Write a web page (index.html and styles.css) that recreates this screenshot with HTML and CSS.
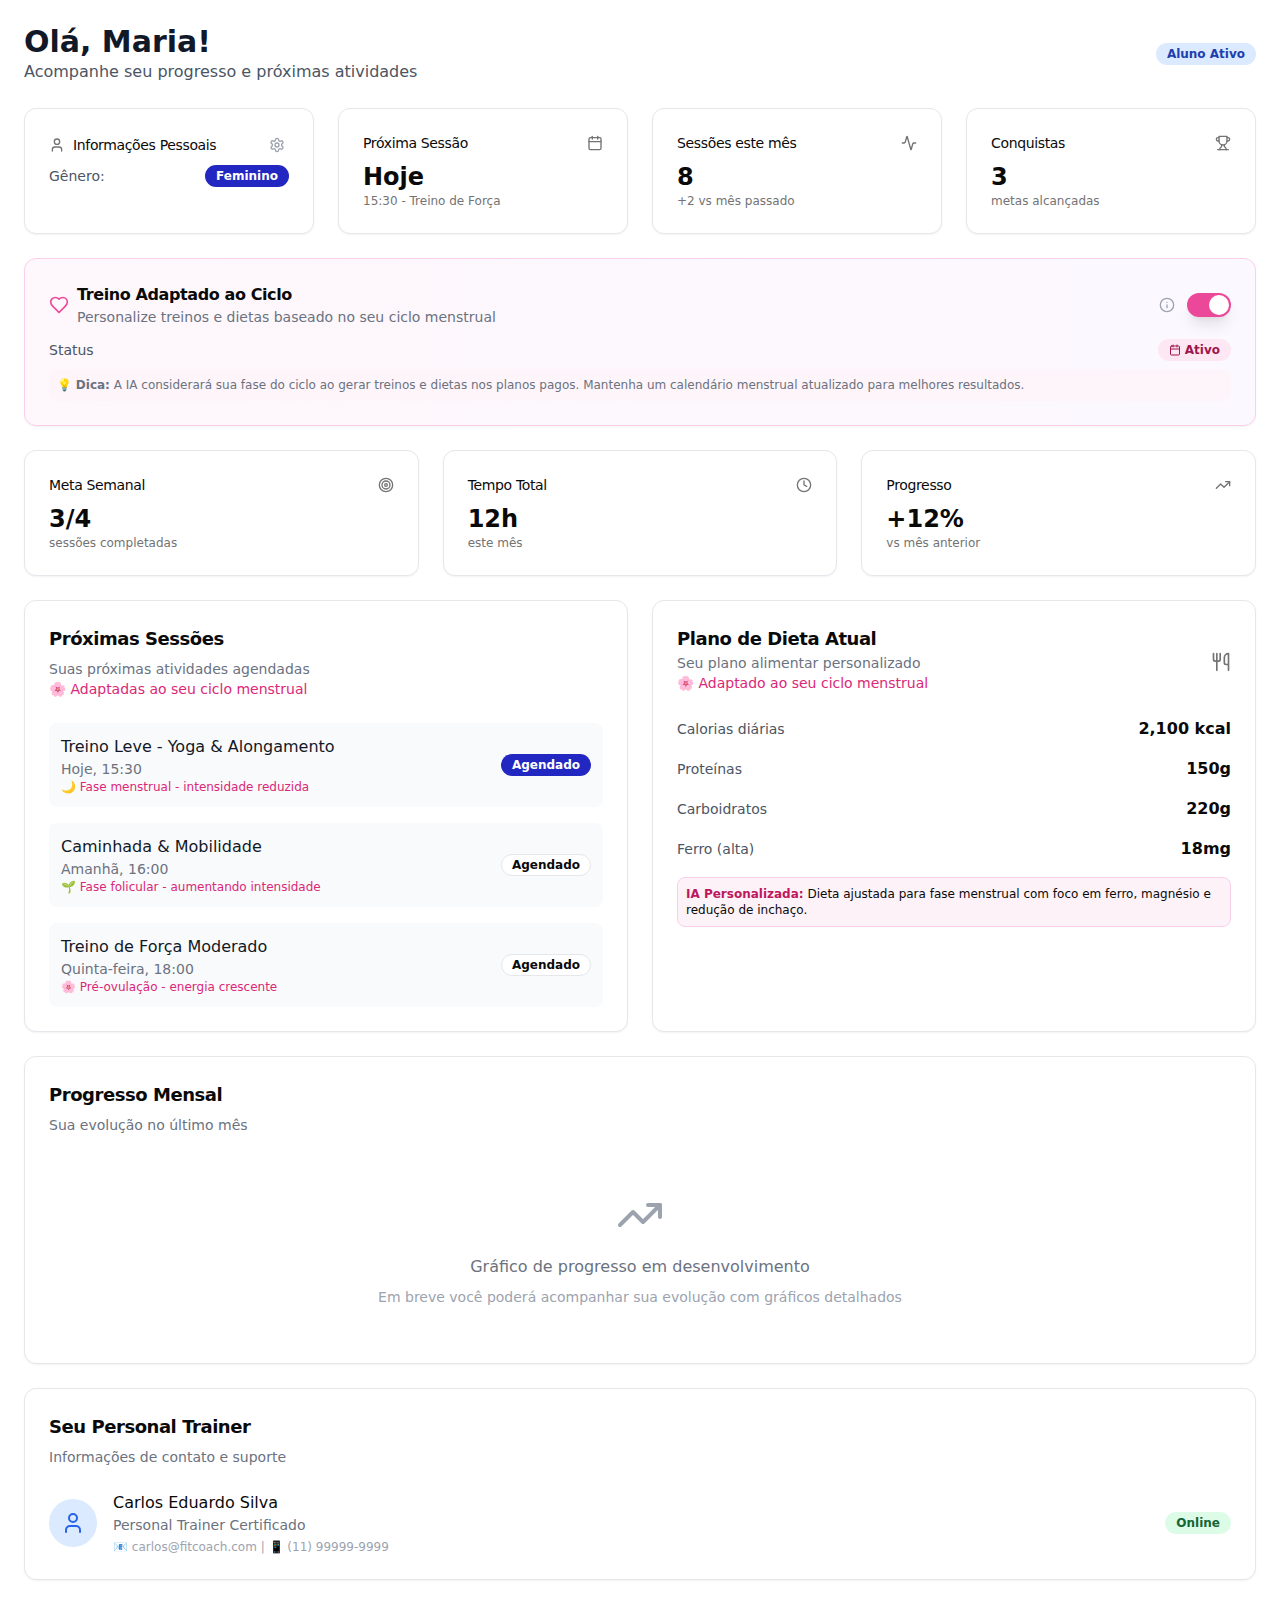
FILE: index.html
```html
<!DOCTYPE html>
<html lang="pt-BR">
<head>
<meta charset="utf-8">
<title>Painel do Aluno</title>
<link rel="stylesheet" href="styles.css">
</head>
<body>
<svg class="sprite" xmlns="http://www.w3.org/2000/svg">
  <symbol id="i-user" viewBox="0 0 24 24"><path d="M19 21v-2a4 4 0 0 0-4-4H9a4 4 0 0 0-4 4v2"/><circle cx="12" cy="7" r="4"/></symbol>
  <symbol id="i-settings" viewBox="0 0 24 24"><path d="M12.22 2h-.44a2 2 0 0 0-2 2v.18a2 2 0 0 1-1 1.73l-.43.25a2 2 0 0 1-2 0l-.15-.08a2 2 0 0 0-2.73.73l-.22.38a2 2 0 0 0 .73 2.73l.15.1a2 2 0 0 1 1 1.72v.51a2 2 0 0 1-1 1.74l-.15.09a2 2 0 0 0-.73 2.73l.22.38a2 2 0 0 0 2.73.73l.15-.08a2 2 0 0 1 2 0l.43.25a2 2 0 0 1 1 1.73V20a2 2 0 0 0 2 2h.44a2 2 0 0 0 2-2v-.18a2 2 0 0 1 1-1.73l.43-.25a2 2 0 0 1 2 0l.15.08a2 2 0 0 0 2.73-.73l.22-.39a2 2 0 0 0-.73-2.73l-.15-.08a2 2 0 0 1-1-1.74v-.5a2 2 0 0 1 1-1.74l.15-.09a2 2 0 0 0 .73-2.73l-.22-.38a2 2 0 0 0-2.73-.73l-.15.08a2 2 0 0 1-2 0l-.43-.25a2 2 0 0 1-1-1.73V4a2 2 0 0 0-2-2z"/><circle cx="12" cy="12" r="3"/></symbol>
  <symbol id="i-calendar" viewBox="0 0 24 24"><path d="M8 2v4"/><path d="M16 2v4"/><rect x="3" y="4" width="18" height="18" rx="2"/><path d="M3 10h18"/></symbol>
  <symbol id="i-activity" viewBox="0 0 24 24"><path d="M22 12h-2.48a2 2 0 0 0-1.93 1.46l-2.35 8.36a.25.25 0 0 1-.48 0L9.24 2.18a.25.25 0 0 0-.48 0l-2.35 8.36A2 2 0 0 1 4.49 12H2"/></symbol>
  <symbol id="i-trophy" viewBox="0 0 24 24"><path d="M6 9H4.5a2.5 2.5 0 0 1 0-5H6"/><path d="M18 9h1.5a2.5 2.5 0 0 0 0-5H18"/><path d="M4 22h16"/><path d="M10 14.66V17c0 .55-.47.98-.97 1.21C7.85 18.75 7 20.24 7 22"/><path d="M14 14.66V17c0 .55.47.98.97 1.21C16.15 18.75 17 20.24 17 22"/><path d="M18 2H6v7a6 6 0 0 0 12 0V2Z"/></symbol>
  <symbol id="i-heart" viewBox="0 0 24 24"><path d="M19 14c1.49-1.46 3-3.21 3-5.5A5.5 5.5 0 0 0 16.5 3c-1.76 0-3 .5-4.5 2-1.5-1.5-2.74-2-4.5-2A5.5 5.5 0 0 0 2 8.5c0 2.3 1.5 4.05 3 5.5l7 7Z"/></symbol>
  <symbol id="i-info" viewBox="0 0 24 24"><circle cx="12" cy="12" r="10"/><path d="M12 16v-4"/><path d="M12 8h.01"/></symbol>
  <symbol id="i-target" viewBox="0 0 24 24"><circle cx="12" cy="12" r="10"/><circle cx="12" cy="12" r="6"/><circle cx="12" cy="12" r="2"/></symbol>
  <symbol id="i-clock" viewBox="0 0 24 24"><circle cx="12" cy="12" r="10"/><polyline points="12 6 12 12 16 14"/></symbol>
  <symbol id="i-trend" viewBox="0 0 24 24"><polyline points="22 7 13.5 15.5 8.5 10.5 2 17"/><polyline points="16 7 22 7 22 13"/></symbol>
  <symbol id="i-utensils" viewBox="0 0 24 24"><path d="M3 2v7c0 1.1.9 2 2 2h4a2 2 0 0 0 2-2V2"/><path d="M7 2v20"/><path d="M21 15V2a5 5 0 0 0-5 5v6c0 1.1.9 2 2 2h3Zm0 0v7"/></symbol>
</svg>

<header class="page-header">
  <div>
    <h1 class="page-title">Olá, Maria!</h1>
    <p class="page-subtitle">Acompanhe seu progresso e próximas atividades</p>
  </div>
  <span class="badge badge-soft-blue">Aluno Ativo</span>
</header>

<section class="grid grid-4">
  <article class="card stat">
    <div class="profile-head">
      <span class="profile-title"><svg class="icon icon-muted"><use href="#i-user"/></svg>Informações Pessoais</span>
      <span class="icon-btn"><svg class="icon icon-light"><use href="#i-settings"/></svg></span>
    </div>
    <div class="profile-row">
      <span class="label">Gênero:</span>
      <span class="badge badge-primary">Feminino</span>
    </div>
  </article>
  <article class="card stat">
    <div class="stat-head"><span class="stat-title">Próxima Sessão</span><svg class="icon icon-muted"><use href="#i-calendar"/></svg></div>
    <div class="stat-value">Hoje</div>
    <p class="stat-note">15:30 - Treino de Força</p>
  </article>
  <article class="card stat">
    <div class="stat-head"><span class="stat-title">Sessões este mês</span><svg class="icon icon-muted"><use href="#i-activity"/></svg></div>
    <div class="stat-value">8</div>
    <p class="stat-note">+2 vs mês passado</p>
  </article>
  <article class="card stat">
    <div class="stat-head"><span class="stat-title">Conquistas</span><svg class="icon icon-muted"><use href="#i-trophy"/></svg></div>
    <div class="stat-value">3</div>
    <p class="stat-note">metas alcançadas</p>
  </article>
</section>

<section class="card cycle">
  <div class="cycle-head">
    <div class="cycle-intro">
      <svg class="icon-20 icon-pink"><use href="#i-heart"/></svg>
      <div>
        <h2 class="cycle-title">Treino Adaptado ao Ciclo</h2>
        <p class="cycle-sub">Personalize treinos e dietas baseado no seu ciclo menstrual</p>
      </div>
    </div>
    <div class="cycle-controls">
      <svg class="icon icon-light"><use href="#i-info"/></svg>
      <span class="toggle"><span class="toggle-thumb"></span></span>
    </div>
  </div>
  <div class="cycle-status">
    <span class="label">Status</span>
    <span class="badge badge-soft-pink"><svg class="icon-12"><use href="#i-calendar"/></svg>Ativo</span>
  </div>
  <p class="tip">💡 <strong>Dica:</strong> A IA considerará sua fase do ciclo ao gerar treinos e dietas nos planos pagos. Mantenha um calendário menstrual atualizado para melhores resultados.</p>
</section>

<section class="grid grid-3">
  <article class="card stat">
    <div class="stat-head"><span class="stat-title">Meta Semanal</span><svg class="icon icon-muted"><use href="#i-target"/></svg></div>
    <div class="stat-value">3/4</div>
    <p class="stat-note">sessões completadas</p>
  </article>
  <article class="card stat">
    <div class="stat-head"><span class="stat-title">Tempo Total</span><svg class="icon icon-muted"><use href="#i-clock"/></svg></div>
    <div class="stat-value">12h</div>
    <p class="stat-note">este mês</p>
  </article>
  <article class="card stat">
    <div class="stat-head"><span class="stat-title">Progresso</span><svg class="icon icon-muted"><use href="#i-trend"/></svg></div>
    <div class="stat-value">+12%</div>
    <p class="stat-note">vs mês anterior</p>
  </article>
</section>

<section class="grid grid-2">
  <article class="card panel">
    <h2 class="panel-title">Próximas Sessões</h2>
    <p class="panel-sub panel-sub-gap">Suas próximas atividades agendadas</p>
    <p class="panel-pink">🌸 Adaptadas ao seu ciclo menstrual</p>
    <ul class="sessions">
      <li class="session">
        <div>
          <p class="session-name">Treino Leve - Yoga &amp; Alongamento</p>
          <p class="session-time">Hoje, 15:30</p>
          <p class="session-phase">🌙 Fase menstrual - intensidade reduzida</p>
        </div>
        <span class="badge badge-primary">Agendado</span>
      </li>
      <li class="session">
        <div>
          <p class="session-name">Caminhada &amp; Mobilidade</p>
          <p class="session-time">Amanhã, 16:00</p>
          <p class="session-phase">🌱 Fase folicular - aumentando intensidade</p>
        </div>
        <span class="badge badge-outline">Agendado</span>
      </li>
      <li class="session">
        <div>
          <p class="session-name">Treino de Força Moderado</p>
          <p class="session-time">Quinta-feira, 18:00</p>
          <p class="session-phase">🌸 Pré-ovulação - energia crescente</p>
        </div>
        <span class="badge badge-outline">Agendado</span>
      </li>
    </ul>
  </article>

  <article class="card panel">
    <div class="diet-head">
      <div>
        <h2 class="panel-title">Plano de Dieta Atual</h2>
        <p class="panel-sub">Seu plano alimentar personalizado</p>
        <p class="panel-pink">🌸 Adaptado ao seu ciclo menstrual</p>
      </div>
      <svg class="icon-20 icon-muted diet-icon"><use href="#i-utensils"/></svg>
    </div>
    <dl class="diet-list">
      <div class="diet-row"><dt>Calorias diárias</dt><dd>2,100 kcal</dd></div>
      <div class="diet-row"><dt>Proteínas</dt><dd>150g</dd></div>
      <div class="diet-row"><dt>Carboidratos</dt><dd>220g</dd></div>
      <div class="diet-row"><dt>Ferro (alta)</dt><dd>18mg</dd></div>
    </dl>
    <p class="diet-note"><strong>IA Personalizada:</strong> Dieta ajustada para fase menstrual com foco em ferro, magnésio e redução de inchaço.</p>
  </article>
</section>

<section class="card panel">
  <h2 class="panel-title">Progresso Mensal</h2>
  <p class="panel-sub panel-sub-gap">Sua evolução no último mês</p>
  <div class="chart-empty">
    <svg class="icon-48"><use href="#i-trend"/></svg>
    <p class="chart-title">Gráfico de progresso em desenvolvimento</p>
    <p class="chart-note">Em breve você poderá acompanhar sua evolução com gráficos detalhados</p>
  </div>
</section>

<section class="card panel">
  <h2 class="panel-title">Seu Personal Trainer</h2>
  <p class="panel-sub panel-sub-gap">Informações de contato e suporte</p>
  <div class="trainer">
    <div class="trainer-info">
      <span class="avatar"><svg class="icon-24"><use href="#i-user"/></svg></span>
      <div>
        <p class="trainer-name">Carlos Eduardo Silva</p>
        <p class="trainer-role">Personal Trainer Certificado</p>
        <p class="trainer-contact">📧 carlos@fitcoach.com | 📱 (11) 99999-9999</p>
      </div>
    </div>
    <span class="badge badge-soft-green">Online</span>
  </div>
</section>
</body>
</html>
```

FILE: styles.css
```css
* { box-sizing: border-box; }

html, body { margin: 0; padding: 0; }

body {
  padding: 24px;
  background: #fff;
  color: #0a0a0a;
  font-family: "DejaVu Sans", sans-serif;
  font-size: 14px;
  line-height: 20px;
  display: flex;
  flex-direction: column;
  gap: 24px;
}

h1, h2, p, ul, dl, dd { margin: 0; padding: 0; }
ul { list-style: none; }

.sprite { display: none; }

svg {
  flex: none;
  display: block;
  fill: none;
  stroke: currentColor;
  stroke-width: 2;
  stroke-linecap: round;
  stroke-linejoin: round;
}

.icon { width: 16px; height: 16px; }
.icon-12 { width: 12px; height: 12px; }
.icon-20 { width: 20px; height: 20px; }
.icon-24 { width: 24px; height: 24px; }
.icon-48 { width: 48px; height: 48px; color: #9ca3af; }
.icon-muted { color: #737373; }
.icon-light { color: #9ca3af; }
.icon-pink { color: #ec4899; }

/* Header */
.page-header {
  display: flex;
  align-items: center;
  justify-content: space-between;
}
.page-title {
  font-size: 30px;
  line-height: 36px;
  font-weight: 700;
  color: #111827;
}
.page-subtitle {
  font-size: 16px;
  line-height: 24px;
  color: #4b5563;
}

/* Badges */
.badge {
  display: inline-flex;
  align-items: center;
  gap: 4px;
  height: 22px;
  padding: 0 10px;
  border: 1px solid transparent;
  border-radius: 999px;
  font-size: 12px;
  line-height: 16px;
  font-weight: 700;
  flex: none;
}
.badge-primary { background: #2327c2; color: #fff; }
.badge-outline { background: #fff; border-color: #e5e7eb; color: #0a0a0a; }
.badge-soft-blue { background: #dbeafe; color: #1e40af; }
.badge-soft-pink { background: #fce7f3; color: #9d174d; }
.badge-soft-green { background: #dcfce7; color: #166534; }

/* Layout */
.grid { display: grid; gap: 24px; }
.grid-4 { grid-template-columns: repeat(4, 1fr); }
.grid-3 { grid-template-columns: repeat(3, 1fr); }
.grid-2 { grid-template-columns: repeat(2, 1fr); }

.card {
  background: #fff;
  border: 1px solid #e5e7eb;
  border-radius: 12px;
  box-shadow: 0 1px 2px rgba(0, 0, 0, 0.05);
}

/* Stat cards */
.stat { padding: 24px; }
.stat-head {
  display: flex;
  align-items: center;
  justify-content: space-between;
  height: 20px;
}
.stat-title {
  font-size: 14px;
  line-height: 20px;
  letter-spacing: -0.025em;
}
.stat-value {
  margin-top: 8px;
  font-size: 24px;
  line-height: 32px;
  font-weight: 700;
}
.stat-note {
  font-size: 12px;
  line-height: 16px;
  color: #737373;
}

.profile-head {
  display: flex;
  align-items: center;
  justify-content: space-between;
  height: 24px;
}
.profile-title {
  display: flex;
  align-items: center;
  gap: 8px;
  letter-spacing: -0.025em;
}
.icon-btn {
  display: flex;
  align-items: center;
  justify-content: center;
  width: 24px;
  height: 24px;
}
.profile-row {
  display: flex;
  align-items: center;
  justify-content: space-between;
  margin-top: 8px;
}
.label { color: #4b5563; }

/* Cycle card */
.cycle {
  padding: 24px;
  border-color: #fbcfe8;
  background: linear-gradient(to right, #fef7fb, #fbf8ff);
}
.cycle-head {
  display: flex;
  align-items: center;
  justify-content: space-between;
}
.cycle-intro {
  display: flex;
  align-items: center;
  gap: 8px;
}
.cycle-title {
  font-size: 16px;
  line-height: 24px;
  font-weight: 700;
  letter-spacing: -0.025em;
}
.cycle-sub { color: #6b7280; }
.cycle-controls {
  display: flex;
  align-items: center;
  gap: 12px;
}
.toggle {
  display: flex;
  justify-content: flex-end;
  width: 44px;
  height: 24px;
  border: 2px solid transparent;
  border-radius: 999px;
  background: #ec4899;
  box-shadow: 0 10px 15px -3px rgba(0, 0, 0, 0.1), 0 4px 6px -4px rgba(0, 0, 0, 0.1);
}
.toggle-thumb {
  width: 20px;
  height: 20px;
  border-radius: 50%;
  background: #fff;
}
.cycle-status {
  display: flex;
  align-items: center;
  justify-content: space-between;
  margin-top: 12px;
}
.tip {
  margin-top: 8px;
  padding: 8px;
  border-radius: 8px;
  background: #fef5fa;
  font-size: 12px;
  line-height: 16px;
  color: #6b7280;
}

/* Panels */
.panel { padding: 24px; }
.panel-title {
  font-size: 18px;
  line-height: 28px;
  font-weight: 700;
  letter-spacing: -0.025em;
}
.panel-sub { color: #6b7280; }
.panel-sub-gap { margin-top: 6px; }
.panel-pink { color: #db2777; }

.sessions {
  display: flex;
  flex-direction: column;
  gap: 16px;
  margin-top: 24px;
}
.session {
  display: flex;
  align-items: center;
  justify-content: space-between;
  padding: 12px;
  border-radius: 8px;
  background: #f9fafb;
}
.session-name {
  font-size: 16px;
  line-height: 24px;
  color: #111827;
}
.session-time { color: #6b7280; }
.session-phase {
  font-size: 12px;
  line-height: 16px;
  color: #db2777;
}

.diet-head {
  display: flex;
  align-items: center;
  justify-content: space-between;
}
.diet-icon { margin-top: 6px; }
.diet-list {
  display: flex;
  flex-direction: column;
  gap: 16px;
  margin-top: 24px;
}
.diet-row {
  display: flex;
  align-items: center;
  justify-content: space-between;
}
.diet-row dt { color: #4b5563; }
.diet-row dd {
  font-size: 16px;
  line-height: 24px;
  font-weight: 700;
}
.diet-note {
  margin-top: 16px;
  padding: 8px;
  border: 1px solid #fbcfe8;
  border-radius: 8px;
  background: #fdf2f8;
  font-size: 12px;
  line-height: 16px;
}
.diet-note strong { color: #be185d; }

/* Chart placeholder */
.chart-empty {
  display: flex;
  flex-direction: column;
  align-items: center;
  margin-top: 24px;
  padding: 32px 0;
}
.chart-title {
  margin-top: 16px;
  font-size: 16px;
  line-height: 24px;
  color: #6b7280;
}
.chart-note {
  margin-top: 8px;
  color: #9ca3af;
}

/* Trainer */
.trainer {
  display: flex;
  align-items: center;
  justify-content: space-between;
  margin-top: 24px;
}
.trainer-info {
  display: flex;
  align-items: center;
  gap: 16px;
}
.avatar {
  display: flex;
  align-items: center;
  justify-content: center;
  width: 48px;
  height: 48px;
  border-radius: 50%;
  background: #dbeafe;
  color: #2563eb;
}
.trainer-name {
  font-size: 16px;
  line-height: 24px;
}
.trainer-role { color: #6b7280; }
.trainer-contact {
  margin-top: 4px;
  font-size: 12px;
  line-height: 16px;
  color: #9ca3af;
}
```
